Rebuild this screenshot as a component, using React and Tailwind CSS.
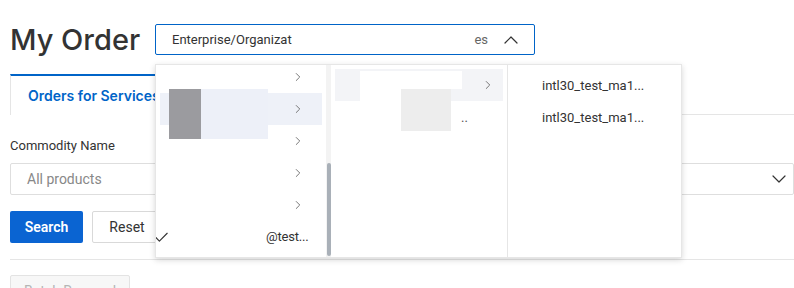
import React from 'react';
import { ChevronRight, ChevronUp, ChevronDown, Check } from 'lucide-react';

const firstColumn = [
    { arrow: true },
    { arrow: true, active: true },
    { arrow: true },
    { arrow: true },
    { arrow: true },
    { label: '@test...', checked: true },
];

const CascaderPanel = () => (
    <div className="absolute left-0 top-[40px] z-10 flex h-[194px] w-[527px] border border-[#e6e6e6] bg-white shadow-[0_2px_6px_rgba(0,0,0,0.16)]">
        {/* level 1, scrolled to the bottom */}
        <div className="flex w-[175px] shrink-0">
            <div className="flex-1 overflow-hidden px-[4px]">
                <div className="-mt-[4px]">
                    {firstColumn.map((row, i) => (
                        <div key={i} className={`flex h-[32px] items-center ${row.active ? 'bg-[#eef1f8]' : ''}`}>
                            {row.checked && <Check size={17} strokeWidth={1.6} className="-ml-[7px] text-[#333]" />}
                            {row.label && <span className="ml-[96px] text-[13px] tracking-[-0.2px] text-[#333]">{row.label}</span>}
                            {row.arrow && <ChevronRight size={14} strokeWidth={1.5} className="ml-auto mr-[17px] text-[#666]" />}
                        </div>
                    ))}
                </div>
            </div>
            <div className="flex w-[5px] items-end bg-[#f3f3f3] pb-[1px]">
                <div className="ml-[1px] h-[93px] w-[4px] rounded-full bg-[#a9b0b8]" />
            </div>
        </div>

        {/* level 2 */}
        <div className="w-[176px] shrink-0 px-[4px] pt-[4px]">
            <div className="flex h-[32px] items-center bg-[#f3f4f7]">
                <ChevronRight size={14} strokeWidth={1.5} className="ml-auto mr-[8px] text-[#666]" />
            </div>
            <div className="flex h-[32px] items-center">
                <span className="ml-[126px] text-[13px] leading-none text-[#555]">..</span>
            </div>
        </div>

        {/* level 3 */}
        <div className="flex-1 border-l border-[#e6e6e6] pt-[5px]">
            <div className="flex h-[32px] items-center pl-[34px] text-[13px] text-[#333]">intl30_test_ma1...</div>
            <div className="flex h-[32px] items-center pl-[34px] text-[13px] text-[#333]">intl30_test_ma1...</div>
        </div>

        {/* masked areas in the capture */}
        <div className="absolute left-[13px] top-[24px] h-[50px] w-[32px] bg-[#9b9b9f]" />
        <div className="absolute left-[45px] top-[24px] h-[50px] w-[67px] bg-[#edf0f8]" />
        <div className="absolute left-[204px] top-[6px] h-[18px] w-[102px] bg-white" />
        <div className="absolute left-[204px] top-[24px] h-[13px] w-[41px] bg-white" />
        <div className="absolute left-[245px] top-[24px] h-[42px] w-[50px] bg-[#ededed]" />
    </div>
);

const App = () => {
    return (
        <div className="h-[288px] overflow-hidden bg-white pl-[10px] pt-[24px] font-['Roboto','Noto_Sans',sans-serif] text-[#333]">
            <div className="flex h-[31px] items-center">
                <h1 className="w-[145px] shrink-0 font-['Inter',sans-serif] text-[29px] font-medium leading-none text-[#333]">My Order</h1>
                <div className="relative">
                    <div className="flex h-[31px] w-[380px] items-center rounded-[2px] border border-[#0064c8] pl-[16px] pr-[11px] text-[13px] text-[#333]">
                        <span>Enterprise/Organizat</span>
                        <span className="ml-auto text-[#666]">es</span>
                        <ChevronUp size={24} strokeWidth={1.2} className="ml-[11px] text-[#333]" />
                    </div>
                    <CascaderPanel />
                </div>
            </div>

            <div className="mt-[19px] flex border-b border-[#e5e5e5]">
                <div className="-mb-px flex h-[41px] w-[170px] items-center border-x border-t-2 border-[#e5e5e5] border-t-[#0064c8] bg-white pl-[17px] font-['Inter',sans-serif] text-[14px] font-semibold text-[#0064c8]">
                    Orders for Services
                </div>
            </div>

            <div className="mt-[21px] text-[13px] leading-[20px] text-[#333]">Commodity Name</div>
            <div className="mt-[7px] flex h-[32px] items-center rounded-[2px] border border-[#dedede] pl-[16px] pr-[2px]">
                <span className="text-[14px] text-[#888]">All products</span>
                <ChevronDown size={24} strokeWidth={1.2} className="ml-auto text-[#333]" />
            </div>

            <div className="mt-[16px] flex gap-[9px]">
                <button className="h-[32px] w-[73px] rounded-[2px] bg-[#0a64d2] text-[14px] font-semibold text-white">Search</button>
                <button className="h-[32px] w-[70px] rounded-[2px] border border-[#d9d9d9] bg-white text-[14px] text-[#333]">Reset</button>
            </div>

            <div className="mt-[16px] border-t border-[#e5e5e5]" />

            <button className="mt-[15px] h-[32px] w-[120px] rounded-[2px] border border-[#e3e3e3] bg-[#f7f7f7] text-[14px] text-[#b5b5b5]">Batch Renewal</button>
        </div>
    );
};

export default App;
